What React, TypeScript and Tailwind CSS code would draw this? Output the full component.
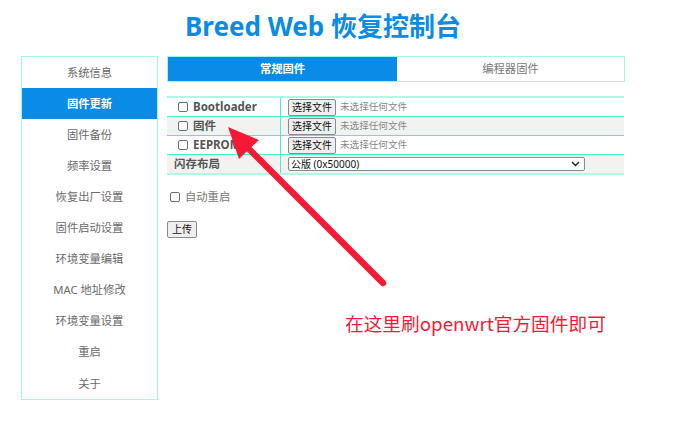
import React from "react";

const menu = [
  "系统信息",
  "固件更新",
  "固件备份",
  "频率设置",
  "恢复出厂设置",
  "固件启动设置",
  "环境变量编辑",
  "MAC 地址修改",
  "环境变量设置",
  "重启",
  "关于",
];

function Box() {
  return (
    <span className="inline-block w-[10px] h-[10px] border border-[#6f6f6f] rounded-[2px] bg-white shrink-0" />
  );
}

function FileRow({ label, gray }: { label: string; gray?: boolean }) {
  return (
    <div className={`flex h-[19px] border-b border-[#3ef3d4] ${gray ? "bg-[#f3f2f1]" : "bg-white"}`}>
      <div className="w-[114px] border-r border-[#3ef3d4] flex items-center pl-[11px] gap-[5px]">
        <Box />
        <span className="text-[11.5px] text-[#555] font-bold">{label}</span>
      </div>
      <div className="flex-1 flex items-center pl-[7px] gap-[4px]">
        <span className="h-[17px] px-[3px] flex items-center text-[10px] text-[#111] bg-[#efefef] border border-[#8a8a8a] rounded-[2px]">
          选择文件
        </span>
        <span className="text-[9.6px] text-[#888]">未选择任何文件</span>
      </div>
    </div>
  );
}

export default function App() {
  return (
    <div
      className="relative w-[690px] h-[426px] bg-white overflow-hidden"
      style={{ fontFamily: '"Noto Sans", "Noto Sans CJK SC", sans-serif' }}
    >
      <div className="w-[604px] ml-[21px]">
        <h1 className="text-center text-[26px] font-bold text-[#0a8be6] leading-[34px] pt-[9px] h-[56px]">
          Breed Web 恢复控制台
        </h1>
        <div className="flex gap-[9px]">
          <div className="w-[137px] border border-[#9ff8e6] flex flex-col">
            {menu.map((m, i) => (
              <div
                key={m}
                className={`h-[31.1px] flex items-center justify-center text-[11.3px] pt-[1px] ${
                  i === 1 ? "bg-[#0a8be6] text-white font-bold" : "text-[#6a6a6a]"
                }`}
              >
                {m}
              </div>
            ))}
          </div>
          <div className="w-[458px] flex flex-col">
            <div className="flex h-[26px] border border-[#9ff8e6]">
              <div className="w-[229px] bg-[#0a8be6] text-white font-bold text-[11.3px] flex items-center justify-center">
                常规固件
              </div>
              <div className="flex-1 text-[11.3px] text-[#777] flex items-center justify-center">
                编程器固件
              </div>
            </div>
            <div className="mt-[14px] w-[457px] border-t-2 border-[#aef8e8]">
              <FileRow label="Bootloader" />
              <FileRow label="固件" gray />
              <FileRow label="EEPROM" />
              <div className="flex h-[20px] bg-[#f3f2f1] border-b-2 border-[#aef8e8]">
                <div className="w-[114px] border-r border-[#3ef3d4] flex items-center pl-[7px]">
                  <span className="text-[11.5px] font-bold text-[#555]">闪存布局</span>
                </div>
                <div className="flex-1 flex items-center pl-[7px]">
                  <div className="w-[297px] h-[14px] bg-white border border-[#8a8a8a] rounded-[2px] flex items-center justify-between pl-[2px] pr-[4px]">
                    <span className="text-[10px] text-[#111] leading-none">公版 (0x50000)</span>
                    <svg width="9" height="6" viewBox="0 0 9 6">
                      <path d="M1 1 L4.5 4.5 L8 1" fill="none" stroke="#222" strokeWidth="1.4" />
                    </svg>
                  </div>
                </div>
              </div>
            </div>
            <div className="mt-[14px] flex items-center gap-[5px] pl-[3px]">
              <Box />
              <span className="text-[11.3px] text-[#777]">自动重启</span>
            </div>
            <div className="mt-[9px]">
              <span className="inline-flex h-[17px] px-[4px] items-center text-[10px] text-[#111] bg-[#efefef] border border-[#8a8a8a] rounded-[2px]">
                上传
              </span>
            </div>
          </div>
        </div>
      </div>

      <svg className="absolute left-0 top-0" width="690" height="426" viewBox="0 0 690 426">
        <line x1="383" y1="283" x2="243" y2="143" stroke="#f41a35" strokeWidth="6.5" strokeLinecap="round" />
        <polygon points="228,127 259,140 239,159" fill="#f41a35" />
      </svg>
      <div
        className="absolute left-[345px] top-[310px] text-[18.7px] leading-[26px] text-[#f41a35]"
        style={{ fontFamily: '"Noto Sans CJK SC", sans-serif' }}
      >
        在这里刷openwrt官方固件即可
      </div>
    </div>
  );
}
